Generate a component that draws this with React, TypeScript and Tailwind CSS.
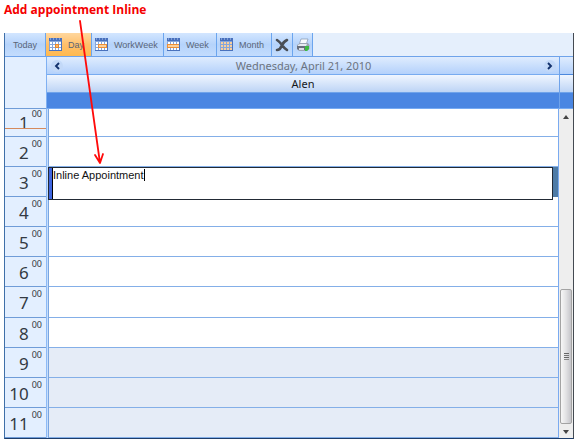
import type { ReactNode } from "react";

type View = { label: string; cells: string; width: string; active?: boolean };

const views: View[] = [
  { label: "Day", cells: "day", width: "w-[46px]", active: true },
  { label: "WorkWeek", cells: "work", width: "w-[72px]" },
  { label: "Week", cells: "week", width: "w-[53px]" },
  { label: "Month", cells: "month", width: "w-[55px]" },
];

const hours = [2, 3, 4, 5, 6, 7, 8, 9, 10, 11];

function CalendarIcon({ kind }: { kind: string }) {
  const columns = [1, 4, 7, 10];
  const rows = [4, 7, 10];
  const isMarked = (c: number, r: number) =>
    kind === "month" || (kind === "day" && c === 7 && r === 7);
  return (
    <svg width="13" height="13" viewBox="0 0 13 13" className="shrink-0" aria-hidden="true">
      <rect width="13" height="13" fill="#86a5da" />
      <rect width="13" height="3" fill="#4870bd" />
      <path d="M1 1h1M4 1h1M7 1h1M10 1h1" stroke="#b9cdf0" />
      {rows.map((r) =>
        columns.map((c) => (
          <rect
            key={`${c}-${r}`}
            x={c}
            y={r}
            width="2"
            height="2"
            fill={isMarked(c, r) ? (kind === "month" ? "#f8cf9c" : "#f59a3a") : "#ffffff"}
          />
        )),
      )}
      {kind === "day" && <rect x="6.5" y="6.5" width="3" height="3" fill="#fbb867" stroke="#e8862c" />}
      {kind === "week" && <rect x="0.5" y="6.5" width="12" height="3" fill="#fdd09a" stroke="#ee8f35" />}
      {kind === "work" && <rect x="3.5" y="6.5" width="8" height="3" fill="#fdd09a" stroke="#ee8f35" />}
      <path d="M12.5 2v11M0 12.5h13" stroke="#4a72bd" />
    </svg>
  );
}

function ToolButton({
  children,
  width,
  active,
  label,
  align = "justify-center",
}: {
  children: ReactNode;
  width: string;
  active?: boolean;
  label?: string;
  align?: string;
}) {
  const tone = active
    ? "from-[#ffd79e] via-[#ffc06a] to-[#ffb94e]"
    : "from-[#d3e6ff] via-[#b5d3fb] to-[#c3dcfd]";
  return (
    <button
      type="button"
      aria-label={label}
      className={`${width} ${tone} ${align} flex shrink-0 items-center gap-[6px] border-r border-[#6ba5ee] bg-linear-to-b font-['Liberation_Sans',sans-serif] text-[9px] leading-3 text-[#5a6577]`}
    >
      {children}
    </button>
  );
}

function Toolbar() {
  return (
    <div className="flex h-[23px] bg-[#e5effc]">
      <ToolButton width="w-[41px]">Today</ToolButton>
      {views.map((v) => (
        <ToolButton key={v.label} width={v.width} active={v.active} align="justify-start pl-[3px]">
          <CalendarIcon kind={v.cells} />
          {v.label}
        </ToolButton>
      ))}
      <ToolButton width="w-[21px]" label="Delete">
        <svg width="14" height="14" viewBox="0 0 14 14" className="shrink-0" aria-hidden="true">
          <path d="M2 2q3 2 5 5t5 5M12 2Q8 4 6.500 8T2 12" fill="none" stroke="#4a4e55" strokeWidth="2.600" strokeLinecap="round" />
        </svg>
      </ToolButton>
      <ToolButton width="w-[20px]" label="Print">
        <svg width="14" height="14" viewBox="0 0 14 14" className="shrink-0" aria-hidden="true">
          <path d="M5 1h7l-2 6H3z" fill="#f7fafd" stroke="#8595ad" strokeWidth=".7" />
          <path d="M1 7l3-2h8l1.500 2v4L11 13H3l-2-2z" fill="#9ba5b4" />
          <path d="M2 7l2-1h7l-1 2H2z" fill="#e6eaf0" />
          <path d="M1 8h8v4H3l-2-1z" fill="#686f7d" />
          <path d="M3 10h5v2H3z" fill="#d9dee6" />
          <path d="M9 8h4v3l-2 2H9z" fill="#3dbb42" />
        </svg>
      </ToolButton>
    </div>
  );
}

function NavButton({ label, d }: { label: string; d: string }) {
  return (
    <button type="button" aria-label={label} className="flex size-3 items-center justify-center rounded-full bg-[#c3d9f8]">
      <svg width="8" height="8" viewBox="0 0 8 8" aria-hidden="true">
        <path d={d} fill="none" stroke="#12326e" strokeWidth="1.900" />
      </svg>
    </button>
  );
}

function Header() {
  return (
    <div className="flex border-t border-[#6fa3ea]">
      <div className="w-[41px] shrink-0 border-b border-[#6f9cd8] bg-[#e3efff]" />
      <div className="min-w-0 flex-1 border-l border-[#7fb0f2]">
        <div className="flex h-[18px] items-center justify-between border-b border-[#77abf0] bg-linear-to-b from-[#dfecfe] to-[#b4d1fb] pr-[3px] pl-1">
          <NavButton label="Previous day" d="M6 1L3 4l3 3" />
          <h2 className="text-[11px] leading-4 text-[#6c7480]">Wednesday, April 21, 2010</h2>
          <NavButton label="Next day" d="M2 1l3 3-3 3" />
        </div>
        <div className="flex h-[18px] items-center justify-center border-b border-[#6fa3ea] bg-linear-to-b from-[#f0f6ff] to-[#bdd4f5] text-[11px] leading-4 text-[#15181c]">
          Alen
        </div>
        <div className="h-4 border-b border-[#76aaf2] bg-[#4a86e2]" />
      </div>
      <div className="w-[14px] shrink-0 border-l border-[#6fa3ea]">
        <div className="h-[18px] border-b border-[#4b88dd] bg-linear-to-b from-[#dfecfe] to-[#b4d1fb]" />
        <div className="h-[18px] border-b border-[#6fa3ea] bg-linear-to-b from-[#f0f6ff] to-[#bdd4f5]" />
        <div className="h-4 border-b border-[#76aaf2] bg-[#4a86e2]" />
      </div>
    </div>
  );
}

function HourLabel({ hour, pad = "pt-[2px]" }: { hour: number; pad?: string }) {
  return (
    <div className={`${pad} flex w-[41px] shrink-0 justify-end border-b border-[#6f9cd8] bg-[#e3efff] pr-1 text-[#333a43]`}>
      <span className="pt-1 pr-[3px] text-[17px] leading-5">{hour}</span>
      <sup className="top-0 text-[9px] leading-[10px]">00</sup>
    </div>
  );
}

function GutterRule() {
  return <div className="w-[3px] shrink-0 border-r border-l border-r-[#7aa5e0] border-l-[#8dbaf6] bg-[#c7defb]" />;
}

function InlineEditor() {
  return (
    <div className="absolute top-0 right-0 -left-px flex bg-[#4e7ba6] pr-[5px]">
      <div className="-mb-[3px] flex h-[33px] flex-1 border border-[#222a35] bg-white">
        <div className="w-1 border-r border-black bg-[#3f66e0]" />
        <input
          aria-label="Appointment subject"
          defaultValue="Inline Appointment"
          className="field-sizing-content h-[14px] font-['Liberation_Sans',sans-serif] text-[11px] leading-[14px] text-[#111111] outline-none"
        />
        <span className="mt-px h-3 w-px bg-black" />
      </div>
    </div>
  );
}

function TimeSlots() {
  return (
    <div className="flex min-w-0 flex-1 flex-col">
      <div className="flex h-7 shrink-0">
        <div className="relative flex">
          <HourLabel hour={1} pad="pt-0" />
          <div className="absolute inset-x-0 bottom-[8px] h-px bg-[#d58a5c]" />
        </div>
        <GutterRule />
        <div className="flex-1 border-b border-[#84afe8]" />
      </div>
      {hours.map((hour) => (
        <div key={hour} className="flex min-h-0 flex-1">
          <HourLabel hour={hour} />
          <GutterRule />
          <div className={`relative min-w-0 flex-1 border-b border-[#84afe8] ${hour > 8 ? "bg-[#e5ecf7]" : "bg-white"} ${hour === 3 ? "z-10" : ""}`}>
            {hour === 3 && <InlineEditor />}
          </div>
        </div>
      ))}
    </div>
  );
}

function ScrollBar() {
  return (
    <div className="flex w-[15px] shrink-0 flex-col border-l border-[#7aaaf0] bg-[#eeeeee]" aria-hidden="true">
      <svg width="14" height="16" viewBox="0 0 14 16">
        <path d="M4 10h6L7 6z" fill="#444444" />
      </svg>
      <div className="flex-[165]" />
      <div className="ml-px flex w-3 flex-[134] flex-col items-center justify-center gap-px rounded-xs border border-[#a3a3a3] bg-linear-to-r from-[#f7f7f7] via-[#e2e2e4] to-[#c5c5ca]">
        <div className="h-px w-[5px] bg-[#666666]" />
        <div className="h-px w-[5px] bg-[#777777]" />
        <div className="h-px w-[5px] bg-[#666666]" />
        <div className="h-px w-[5px] bg-[#888888]" />
      </div>
      <svg width="14" height="14" viewBox="0 0 14 14">
        <path d="M4 6h6l-3 4z" fill="#444444" />
      </svg>
    </div>
  );
}

export default function App() {
  return (
    <main className="relative flex h-screen min-h-[400px] flex-col bg-white pr-1 pb-[3px] pl-1 font-['Noto_Sans',sans-serif]">
      <h1 className="h-[33px] shrink-0 pt-[2px] font-['Open_Sans',sans-serif] text-xs leading-4 font-bold text-[#f50000]">
        Add appointment Inline
      </h1>
      <section className="flex min-h-0 flex-1 flex-col border-r border-b border-l border-r-[#444a52] border-b-[#1d3d6b] border-l-[#3f6fa8]">
        <Toolbar />
        <Header />
        <div className="flex min-h-0 flex-1">
          <TimeSlots />
          <ScrollBar />
        </div>
      </section>
      <svg width="120" height="170" viewBox="0 0 120 170" className="pointer-events-none absolute top-0 left-0 z-20" aria-hidden="true">
        <path d="M80 21L100 163M95 155l5 8 3-9" fill="none" stroke="#ff0a0a" strokeWidth="1.800" strokeLinecap="round" strokeLinejoin="round" />
      </svg>
    </main>
  );
}
